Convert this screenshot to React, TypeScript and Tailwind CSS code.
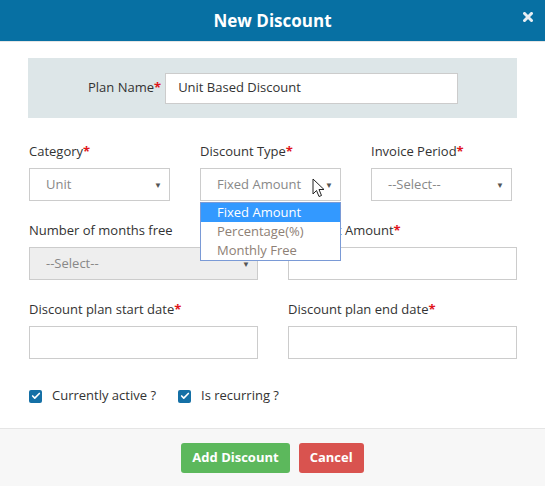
import { Check } from 'lucide-react'

const Req = () => <span className="text-[#e0151b] font-bold">*</span>

const Caret = () => (
  <span className="text-[8px] text-[#555] leading-none">▼</span>
)

const SelectBox = ({ value, width, disabled }: { value: string; width: string; disabled?: boolean }) => (
  <div
    className={`${width} h-[33px] border border-[#cccccc] flex items-center justify-between pl-[16px] pr-[7px] text-[13px] text-[#888] ${
      disabled ? 'bg-[#eeeeee]' : 'bg-white'
    }`}
  >
    <span>{value}</span>
    <Caret />
  </div>
)

const Field = ({ label, required, children }: { label: string; required?: boolean; children: React.ReactNode }) => (
  <div className="flex flex-col">
    <label className="text-[13px] leading-[18px] text-[#333] mb-[8px] whitespace-nowrap">
      {label}
      {required && <Req />}
    </label>
    {children}
  </div>
)

const CheckItem = ({ label }: { label: string }) => (
  <div className="flex items-center gap-[10px]">
    <div className="w-[13px] h-[13px] rounded-[2px] bg-[#1570a6] flex items-center justify-center">
      <Check className="w-[10px] h-[10px] text-white" strokeWidth={4} />
    </div>
    <span className="text-[13px] text-[#333]">{label}</span>
  </div>
)

const App = () => {
  return (
    <div className="w-[545px] h-[486px] bg-white flex flex-col font-['Open_Sans',sans-serif] overflow-hidden">
      {/* Header */}
      <div className="relative h-[42px] bg-[#0770a3] border-b border-[#e5e5e5] flex items-center justify-center shrink-0">
        <h1 className="text-white font-bold text-[17px]">New Discount</h1>
        <svg className="absolute right-[12px] top-[12px]" width="10" height="10" viewBox="0 0 10 10">
          <path d="M1.5 1.5 L8.5 8.5 M8.5 1.5 L1.5 8.5" stroke="#e6eef3" strokeWidth="3" strokeLinecap="square" />
        </svg>
      </div>

      {/* Body */}
      <div className="flex-1 px-[28px] pt-[16px]">
        <div className="h-[60px] bg-[#dde6e8] flex items-center pl-[60px]">
          <label className="text-[13px] text-[#333] whitespace-nowrap shrink-0">
            Plan Name<Req />
          </label>
          <div className="ml-[4px] w-[293px] h-[31px] border border-[#cccccc] bg-white flex items-center pl-[12px] text-[13px] text-[#333]">
            Unit Based Discount
          </div>
        </div>

        <div className="pl-[1px]">
          <div className="mt-[24px] flex gap-[30px]">
            <Field label="Category" required>
              <SelectBox value="Unit" width="w-[141px]" />
            </Field>
            <div className="relative">
              <Field label="Discount Type" required>
                <SelectBox value="Fixed Amount" width="w-[141px]" />
              </Field>
              {/* open dropdown */}
              <div className="absolute left-0 top-[60px] w-[141px] border border-[#7a9ad6] bg-white text-[13px] leading-[19px] z-10">
                <div className="bg-[#3399ff] text-white pl-[16px]">Fixed Amount</div>
                <div className="text-[#8e8075] pl-[16px]">Percentage(%)</div>
                <div className="text-[#8e8075] pl-[16px]">Monthly Free</div>
              </div>
              {/* mouse cursor */}
              <svg className="absolute left-[112px] top-[36px] z-20" width="14" height="21" viewBox="0 0 14 21">
                <path d="M1 1 L1 16 L4.5 12.5 L7 18.5 L9.5 17.5 L7 11.5 L12 11.5 Z" fill="white" stroke="#222" strokeWidth="1" strokeLinejoin="round" />
              </svg>
            </div>
            <Field label="Invoice Period" required>
              <SelectBox value="--Select--" width="w-[141px]" />
            </Field>
          </div>

          <div className="mt-[20px] flex gap-[30px]">
            <Field label="Number of months free">
              <SelectBox value="--Select--" width="w-[229px]" disabled />
            </Field>
            <Field label="Discount Amount" required>
              <div className="w-[229px] h-[33px] border border-[#cccccc] bg-white" />
            </Field>
          </div>

          <div className="mt-[20px] flex gap-[30px]">
            <Field label="Discount plan start date" required>
              <div className="w-[229px] h-[33px] border border-[#cccccc] bg-white" />
            </Field>
            <Field label="Discount plan end date" required>
              <div className="w-[229px] h-[33px] border border-[#cccccc] bg-white" />
            </Field>
          </div>

          <div className="mt-[28px] flex gap-[22px] h-[18px] items-center">
            <CheckItem label="Currently active ?" />
            <CheckItem label="Is recurring ?" />
          </div>
        </div>
      </div>

      {/* Footer */}
      <div className="h-[58px] shrink-0 border-t border-[#e5e5e5] bg-[#f7f7f7] flex items-center justify-center gap-[9px]">
        <button className="h-[30px] px-[11px] rounded-[3px] bg-[#5cb85c] text-white font-bold text-[13px]">
          Add Discount
        </button>
        <button className="h-[30px] px-[11px] rounded-[3px] bg-[#d9534f] text-white font-bold text-[13px]">
          Cancel
        </button>
      </div>
    </div>
  )
}

export default App
